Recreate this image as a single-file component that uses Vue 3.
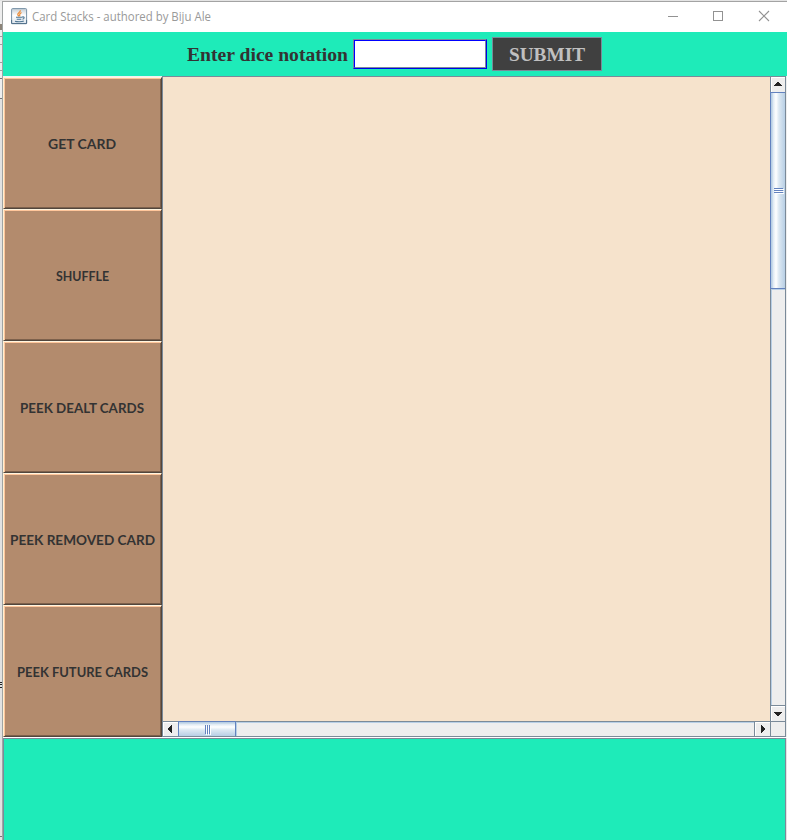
<script setup>
const actions = [
  { label: 'GET CARD', width: 68 },
  { label: 'SHUFFLE', width: 53 },
  { label: 'PEEK DEALT CARDS', width: 124 },
  { label: 'PEEK REMOVED CARD', width: 145 },
  { label: 'PEEK FUTURE CARDS', width: 131 }
]
</script>

<template>
  <div class="screen">
    <div class="behind">
      <i class="smudge"></i>
      <i v-for="n in 6" :key="n" :class="['rule', 'r' + n]"></i>
      <svg class="glyph" width="2" height="8" shape-rendering="crispEdges"><path d="M0 1h2M0 3h2M0 6h2" stroke="#222" /></svg>
      <i class="rule r7"></i>
    </div>
    <div class="window">
      <header class="titlebar">
        <svg class="java" width="17" height="17" viewBox="0 0 17 17">
          <defs>
            <linearGradient id="ico" x2="0" y2="1"><stop stop-color="#c3ccd4" /><stop offset=".45" stop-color="#fff" /><stop offset="1" stop-color="#dce5ed" /></linearGradient>
          </defs>
          <rect x=".6" y=".6" width="15" height="15" rx="1" fill="url(#ico)" stroke="#7891a6" />
          <path d="M.6 12v3.6h15V12" fill="none" stroke="#506f8a" />
          <path d="M9.2 2.2c.8 2-3.2 2.9-2.4 4.5.3.7 1 1.1 1.1 1.8M10.5 4.5c-3 1.5-1.7 2.1-1.7 3.8" fill="none" stroke="#ed8b35" stroke-width="1.25" />
          <path d="M5 9.3h6.2M5.7 11.2h4.6M4 13.2c2 .7 7 .7 8.8-.2M11.2 9c2.8-.7 2.2 1.8.3 2.3" fill="none" stroke="#4e7592" stroke-width="1.1" />
        </svg>
        <svg class="title" width="190" height="20"><text x="0" y="14" textLength="179" lengthAdjust="spacingAndGlyphs">Card Stacks - authored by Biju Ale</text></svg>
        <svg class="controls" width="110" height="20" viewBox="0 0 110 20" fill="none" stroke="#929292">
          <path d="M5 10.5h10" shape-rendering="crispEdges" />
          <rect x="50.5" y="5.5" width="9" height="9" shape-rendering="crispEdges" />
          <path d="M96 5l10 10M106 5L96 15" stroke-width="1.1" />
        </svg>
      </header>
      <form class="toolbar" @submit.prevent>
        <label for="dice"><svg width="163" height="24"><text x="0" y="19" textLength="161" lengthAdjust="spacingAndGlyphs">Enter dice notation</text></svg></label>
        <div class="field"><input id="dice" type="text" autocomplete="off" /></div>
        <button class="submit"><svg width="76" height="24"><text x="0" y="19" textLength="76" lengthAdjust="spacingAndGlyphs">SUBMIT</text></svg></button>
      </form>
      <main class="content">
        <nav class="actions">
          <button v-for="a in actions" :key="a.label" class="action">
            <svg :width="a.width" height="18"><text x="0" y="15" :textLength="a.width" lengthAdjust="spacingAndGlyphs">{{ a.label }}</text></svg>
          </button>
        </nav>
        <section class="pane">
          <div class="canvas"></div>
          <div class="vbar">
            <div class="cap up"><svg width="8" height="4" shape-rendering="crispEdges"><path d="M3 0h2v1h1v1h1v1h1v1H0V3h1V2h1V1h1z" /></svg></div>
            <div class="vthumb"><i></i><i></i><i></i></div>
            <div class="vtrack"></div>
            <div class="cap down"><svg width="8" height="4" shape-rendering="crispEdges"><path d="M0 0h8v1H7v1H6v1H5v1H3V3H2V2H1V1H0z" /></svg></div>
          </div>
          <div class="hbar">
            <div class="hcap left"><svg width="4" height="8" shape-rendering="crispEdges"><path d="M4 0v8H3V7H2V6H1V5H0V3h1V2h1V1h1V0z" /></svg></div>
            <div class="hthumb"><i></i><i></i><i></i></div>
            <div class="htrack"></div>
            <div class="hcap right"><svg width="4" height="8" shape-rendering="crispEdges"><path d="M0 0v8h1V7h1V6h1V5h1V3H3V2H2V1H1V0z" /></svg></div>
          </div>
          <div class="corner"></div>
        </section>
      </main>
      <footer class="bottom"></footer>
    </div>
  </div>
</template>

<style>
body { overflow: hidden; }
</style>

<style scoped>
* { box-sizing: border-box; }
svg { display: block; overflow: visible; }
button { padding: 0; margin: 0; border-radius: 0; }
.screen { width: 787px; height: 840px; display: flex; background: #e4e4e4; padding-top: 1px; }
.behind { width: 2px; position: relative; background: linear-gradient(#eee 0 96px, #e1e1e1 98px); }
.smudge { position: absolute; top: 23px; left: 0; width: 2px; height: 6px; background: #8c8378; }
.rule { position: absolute; left: 0; width: 2px; height: 1px; background: #a0a0a0; }
.r1 { top: 35px; } .r2 { top: 43px; } .r3 { top: 61px; } .r4 { top: 69px; } .r5 { top: 77px; background: #777; } .r6 { top: 97px; background: #777; } .r7 { top: 835px; background: #777; }
.glyph { position: absolute; top: 680px; left: 0; }
.window { width: 785px; height: 839px; border-left: 1px solid #a0a4a4; border-top: 1px solid #a3a3a3; display: flex; flex-direction: column; }
.titlebar { height: 30px; flex: none; background: #fff; display: flex; align-items: center; padding-left: 8px; }
.java { margin-top: -1px; }
.title { margin-left: 4px; }
.title text { font: 12px "Open Sans", "Noto Sans", sans-serif; fill: #999; }
.controls { margin: -3px 0 0 441px; }
.toolbar { height: 44px; flex: none; background: #1eebb9; display: flex; align-items: center; padding-left: 184px; font: bold 19px "Liberation Serif", serif; margin: 0; }
.toolbar label text { fill: #333; }
.field { width: 134px; height: 30px; margin-left: 3px; border: 1px solid; border-color: #7a8a99 #0000e8 #0000e8 #7a8a99; }
.field input { display: block; width: 132px; height: 28px; border: 1px solid; border-color: #0000ff #7a8a99 #7a8a99 #0000ff; padding: 0 4px; outline: 0; background: #fff; font: inherit; }
.submit { width: 110px; height: 34px; margin-left: 5px; display: grid; place-items: center; background: #404040; border: 1px solid #7a8a99; font: inherit; }
.submit text { fill: #c0c0c0; }
.content { height: 662px; flex: none; display: flex; background: #eee; border-bottom: 1px solid #fff; }
.actions { width: 159px; padding-top: 1px; display: flex; flex-direction: column; background: #f2f2f2; }
.action { width: 159px; height: 132px; display: grid; place-items: center; background: #b38b6d; border: 1px solid; border-color: #fff5df #51463d #51463d #fff0d2; box-shadow: inset 1px 1px #ffc69b, inset -1px -1px #7d614c; font: bold 14px Lato, sans-serif; }
.action text { fill: #333; }
.action:nth-child(odd):nth-child(-n+3) svg { margin-right: 2px; }
.pane { width: 624px; height: 661px; border: 1px solid #7a8a99; border-right: 0; border-bottom: 0; display: grid; grid-template: 644px 16px / 607px 16px; }
.canvas { background: #f6e3cc; }
.vbar { display: flex; flex-direction: column; border-left: 1px solid #7a8a99; border-right: 1px solid #7a8a99; }
.cap { height: 15px; flex: none; display: grid; place-items: center; background: #eee; box-shadow: inset 1px 1px #fff; }
.up { padding-bottom: 1px; }
.cap svg, .hcap svg { fill: #222; }
.down { height: 16px; border-top: 1px solid #7a8a99; }
.vthumb { height: 197px; flex: none; margin-left: -1px; border: 1px solid #6382bf; border-right: 0; background: linear-gradient(90deg, #b8cfe5 0 1px, #dce8f2 2px, #fff 5px, #dce8f2 8px, #b8cfe5 100%); display: flex; flex-direction: column; align-items: center; justify-content: center; gap: 1px; padding-bottom: 1px; }
.vthumb i { width: 9px; height: 1px; background: #6382bf; box-shadow: 1px 1px #fff; }
.vtrack, .htrack { flex: 1; background: #eee; box-shadow: inset 1px 1px #b8cfe5; }
.hbar { display: flex; border-top: 1px solid #7a8a99; border-bottom: 1px solid #7a8a99; }
.hcap { width: 15px; flex: none; display: grid; place-items: center; background: #eee; box-shadow: inset 1px 1px #fff; }
.left { padding-right: 1px; }
.right { width: 16px; border-left: 1px solid #7a8a99; padding-left: 1px; }
.hthumb { width: 58px; flex: none; margin-top: -1px; border: 1px solid #6382bf; border-bottom: 0; background: linear-gradient(#b8cfe5 0 1px, #dce8f2 2px, #fff 5px, #dce8f2 8px, #b8cfe5 100%); display: flex; align-items: center; justify-content: center; gap: 1px; }
.hthumb i { height: 9px; width: 1px; background: #6382bf; box-shadow: 1px 1px #fff; }
.corner { border: 1px solid #7a8a99; border-top-color: #7a8a99; background: #eee; }
.bottom { flex: 1; background: #1eebb9; border: solid #7a8a99; border-width: 1px 1px 0; margin-right: 1px; }
</style>
